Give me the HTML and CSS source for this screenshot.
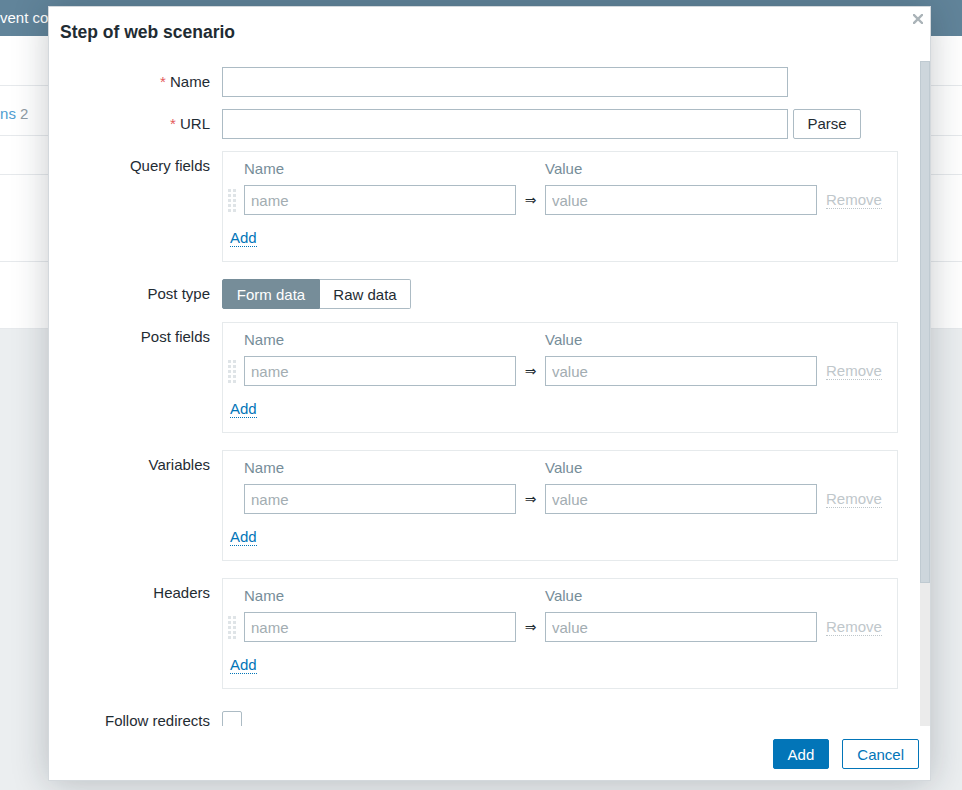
FILE: index.html
```html
<!DOCTYPE html>
<html lang="en">
<head>
<meta charset="utf-8">
<title>Step of web scenario</title>
<link rel="stylesheet" href="styles.css">
</head>
<body>
<div class="app">
  <div class="topbar"><span class="topbar-title">Event correlation</span></div>
  <div class="panel">
    <div class="panel-head"></div>
    <div class="tabs"><span class="tab">Conditions <span class="tab-count">2</span></span></div>
    <div class="trow trow-head"></div>
    <div class="trow trow-a"></div>
    <div class="trow trow-b"></div>
  </div>
</div>

<div class="dialog">
  <div class="dlg-head">
    <h2 class="dlg-title">Step of web scenario</h2>
    <button class="dlg-close" type="button" aria-label="Close">
      <svg width="10" height="10" viewBox="0 0 10 10"><path d="M1 1L9 9M9 1L1 9" stroke="#aab3b8" stroke-width="2.4" stroke-linecap="square"/></svg>
    </button>
  </div>

  <div class="dlg-body">
    <div class="dlg-scroll">
    <div class="form">
      <label class="lbl"><span class="req">*</span> Name</label>
      <div class="field"><input class="inp inp-wide" type="text"></div>

      <label class="lbl"><span class="req">*</span> URL</label>
      <div class="field field-url"><input class="inp inp-wide" type="text"><button class="btn-alt btn-parse" type="button">Parse</button></div>

      <label class="lbl">Query fields</label>
      <div class="kv">
        <div class="kv-grid">
          <span></span><span class="kv-th">Name</span><span></span><span class="kv-th">Value</span><span></span>
          <span class="drag"><svg width="8" height="23" viewBox="0 0 8 23"><g fill="#dfe4e7"><rect x="0" y="0" width="3" height="3"/><rect x="5" y="0" width="3" height="3"/><rect x="0" y="5" width="3" height="3"/><rect x="5" y="5" width="3" height="3"/><rect x="0" y="10" width="3" height="3"/><rect x="5" y="10" width="3" height="3"/><rect x="0" y="15" width="3" height="3"/><rect x="5" y="15" width="3" height="3"/><rect x="0" y="20" width="3" height="3"/><rect x="5" y="20" width="3" height="3"/></g></svg></span>
          <input class="inp inp-kv" type="text" placeholder="name">
          <span class="arrow">⇒</span>
          <input class="inp inp-kv" type="text" placeholder="value">
          <span class="remove">Remove</span>
        </div>
        <div class="kv-add"><a class="link">Add</a></div>
      </div>

      <label class="lbl">Post type</label>
      <div class="field field-seg"><div class="seg"><span class="seg-btn seg-on seg-form">Form data</span><span class="seg-btn seg-raw">Raw data</span></div></div>

      <label class="lbl">Post fields</label>
      <div class="kv">
        <div class="kv-grid">
          <span></span><span class="kv-th">Name</span><span></span><span class="kv-th">Value</span><span></span>
          <span class="drag"><svg width="8" height="23" viewBox="0 0 8 23"><g fill="#dfe4e7"><rect x="0" y="0" width="3" height="3"/><rect x="5" y="0" width="3" height="3"/><rect x="0" y="5" width="3" height="3"/><rect x="5" y="5" width="3" height="3"/><rect x="0" y="10" width="3" height="3"/><rect x="5" y="10" width="3" height="3"/><rect x="0" y="15" width="3" height="3"/><rect x="5" y="15" width="3" height="3"/><rect x="0" y="20" width="3" height="3"/><rect x="5" y="20" width="3" height="3"/></g></svg></span>
          <input class="inp inp-kv" type="text" placeholder="name">
          <span class="arrow">⇒</span>
          <input class="inp inp-kv" type="text" placeholder="value">
          <span class="remove">Remove</span>
        </div>
        <div class="kv-add"><a class="link">Add</a></div>
      </div>

      <label class="lbl">Variables</label>
      <div class="kv">
        <div class="kv-grid">
          <span></span><span class="kv-th">Name</span><span></span><span class="kv-th">Value</span><span></span>
          <span></span>
          <input class="inp inp-kv" type="text" placeholder="name">
          <span class="arrow">⇒</span>
          <input class="inp inp-kv" type="text" placeholder="value">
          <span class="remove">Remove</span>
        </div>
        <div class="kv-add"><a class="link">Add</a></div>
      </div>

      <label class="lbl">Headers</label>
      <div class="kv">
        <div class="kv-grid">
          <span></span><span class="kv-th">Name</span><span></span><span class="kv-th">Value</span><span></span>
          <span class="drag"><svg width="8" height="23" viewBox="0 0 8 23"><g fill="#dfe4e7"><rect x="0" y="0" width="3" height="3"/><rect x="5" y="0" width="3" height="3"/><rect x="0" y="5" width="3" height="3"/><rect x="5" y="5" width="3" height="3"/><rect x="0" y="10" width="3" height="3"/><rect x="5" y="10" width="3" height="3"/><rect x="0" y="15" width="3" height="3"/><rect x="5" y="15" width="3" height="3"/><rect x="0" y="20" width="3" height="3"/><rect x="5" y="20" width="3" height="3"/></g></svg></span>
          <input class="inp inp-kv" type="text" placeholder="name">
          <span class="arrow">⇒</span>
          <input class="inp inp-kv" type="text" placeholder="value">
          <span class="remove">Remove</span>
        </div>
        <div class="kv-add"><a class="link">Add</a></div>
      </div>

      <label class="lbl">Follow redirects</label>
      <div class="field"><span class="checkbox"></span></div>

      <label class="lbl">Retrieve mode</label>
      <div class="field"><div class="seg"><span class="seg-btn seg-on seg-auto">Body</span><span class="seg-btn seg-auto">Headers</span><span class="seg-btn seg-auto">Body and headers</span></div></div>

      <label class="lbl">Timeout</label>
      <div class="field"><input class="inp inp-short" type="text" value="15s"></div>

      <label class="lbl">Required string</label>
      <div class="field"><input class="inp inp-wide" type="text" placeholder="pattern"></div>

      <label class="lbl">Required status codes</label>
      <div class="field"><input class="inp inp-wide" type="text"></div>
    </div>
    </div>
    <div class="scrollbar"><div class="scrollbar-thumb"></div></div>
  </div>

  <div class="dlg-foot">
    <button class="btn btn-primary" type="button">Add</button>
    <button class="btn btn-outline" type="button">Cancel</button>
  </div>
</div>
</body>
</html>
```

FILE: styles.css
```css
* { box-sizing: border-box; }

html, body {
  margin: 0;
  padding: 0;
}

body {
  width: 962px;
  height: 790px;
  overflow: hidden;
  background: #ebeef0;
  font-family: "Liberation Sans", Arial, sans-serif;
  font-size: 15px;
  color: #1f2c33;
}

/* ---------- page behind the dialog ---------- */
.topbar {
  height: 36px;
  background: #61849a;
  color: #ffffff;
  line-height: 35px;
  white-space: nowrap;
  overflow: hidden;
}
.topbar-title {
  display: block;
  text-indent: -10px;
}

.panel {
  background: #ffffff;
}
.panel-head {
  height: 50px;
  border-bottom: 1px solid #e6e9ec;
}
.tabs {
  height: 50px;
  border-bottom: 1px solid #e6e9ec;
  padding-top: 7px;
  line-height: 42px;
  white-space: nowrap;
  overflow: hidden;
}
.tab {
  display: block;
  text-indent: -55px;
  color: #4f9dd1;
}
.tab-count {
  color: #8f9ca4;
}
.trow {
  border-bottom: 1px solid #e6e9ec;
}
.trow-head { height: 39px; }
.trow-a { height: 87px; }
.trow-b { height: 67px; }

/* ---------- dialog ---------- */
.dialog {
  position: absolute;
  left: 48px;
  top: 6px;
  width: 883px;
  height: 775px;
  background: #ffffff;
  border: 1px solid #d3d8dc;
  box-shadow: 0 2px 34px rgba(20, 32, 40, 0.24);
  display: flex;
  flex-direction: column;
}

.dlg-head {
  position: relative;
  height: 54px;
  flex: none;
  padding: 0 11px;
}
.dlg-title {
  margin: 0;
  font-size: 17.5px;
  font-weight: bold;
  line-height: 50px;
  color: #1f2c33;
}
.dlg-close {
  position: absolute;
  right: 7px;
  top: 7px;
  width: 10px;
  height: 10px;
  padding: 0;
  border: 0;
  background: transparent;
  display: block;
}
.dlg-close svg { display: block; }

.dlg-body {
  height: 665px;
  flex: none;
  display: flex;
}
.dlg-scroll {
  flex: 1;
  min-width: 0;
  overflow: hidden;
}
.scrollbar {
  flex: none;
  width: 10px;
  background: #ebebeb;
}
.scrollbar-thumb {
  height: 522px;
  background: #cdd6dc;
  border: 1px solid #bfcad1;
}

.dlg-foot {
  flex: none;
  height: 54px;
  display: flex;
  justify-content: flex-end;
  align-items: flex-start;
  gap: 13px;
  padding: 13px 11px 0 0;
}

/* ---------- form ---------- */
.form {
  display: grid;
  grid-template-columns: 149px 1fr;
  column-gap: 12px;
  row-gap: 12px;
  padding: 6px 23px 3px 12px;
}

.lbl {
  text-align: right;
  line-height: 30px;
  white-space: nowrap;
  align-self: start;
}
.req {
  color: #e45959;
}

.field {
  display: flex;
  align-items: center;
  min-height: 30px;
}
.field-url {
  gap: 5px;
}
.field-seg {
  margin-bottom: 1px;
}

.inp {
  height: 30px;
  border: 1px solid #acbbc4;
  border-radius: 0;
  padding: 0 6px;
  font-family: "Liberation Sans", Arial, sans-serif;
  font-size: 15px;
  color: #1f2c33;
  background: #ffffff;
  outline: none;
}
.inp::placeholder {
  color: #a3adb2;
}
.inp-wide { width: 566px; }
.inp-kv { width: 272px; }
.inp-short { width: 94px; }

.btn-alt {
  height: 30px;
  border: 1px solid #acbbc4;
  border-radius: 2px;
  background: #ffffff;
  color: #1f2c33;
  font-family: "Liberation Sans", Arial, sans-serif;
  font-size: 15px;
  padding: 0 0 2px;
}
.btn-parse { width: 68px; }

/* key/value boxes */
.kv {
  border: 1px solid #e6eaec;
  padding: 5px 15px 14px 5px;
  margin-bottom: 5px;
}
.kv-grid {
  display: grid;
  grid-template-columns: 16px 272px 29px 272px auto;
  grid-template-rows: 24px 30px;
  row-gap: 4px;
  align-items: center;
}
.kv-th {
  color: #768d99;
  line-height: 24px;
}
.drag {
  display: flex;
  align-items: center;
}
.drag svg { display: block; }
.arrow {
  text-align: center;
  color: #1f2c33;
  font-family: "DejaVu Sans", sans-serif;
  font-size: 14px;
}
.remove {
  justify-self: start;
  margin-left: 9px;
  color: #bfc7cb;
  line-height: 17px;
  border-bottom: 1px dotted #bfc7cb;
}
.kv-add {
  margin-top: 14px;
  padding-left: 2px;
  line-height: 17px;
}
.link {
  display: inline-block;
  color: #0275b8;
  line-height: 17px;
  border-bottom: 1px dotted #0275b8;
  cursor: pointer;
}

/* segmented radio */
.seg {
  display: inline-flex;
  height: 30px;
}
.seg-btn {
  display: flex;
  align-items: center;
  justify-content: center;
  height: 30px;
  border: 1px solid #acbbc4;
  background: #ffffff;
  color: #1f2c33;
  white-space: nowrap;
}
.seg-btn + .seg-btn { border-left: 0; }
.seg-btn:first-child { border-radius: 2px 0 0 2px; }
.seg-btn:last-child { border-radius: 0 2px 2px 0; }
.seg-on {
  background: #768d99;
  border-color: #768d99;
  color: #ffffff;
}
.seg-form { width: 98px; }
.seg-raw { width: 91px; }
.seg-auto { padding: 0 14px; }

.checkbox {
  display: block;
  width: 20px;
  height: 20px;
  border: 1px solid #acbbc4;
  border-radius: 2px;
  background: #ffffff;
}

/* footer buttons */
.btn {
  height: 30px;
  padding: 0 14px;
  border-radius: 2px;
  font-family: "Liberation Sans", Arial, sans-serif;
  font-size: 15px;
}
.btn-primary {
  background: #0275b8;
  border: 1px solid #0275b8;
  color: #ffffff;
}
.btn-outline {
  background: #ffffff;
  border: 1px solid #0275b8;
  color: #0275b8;
}
```
